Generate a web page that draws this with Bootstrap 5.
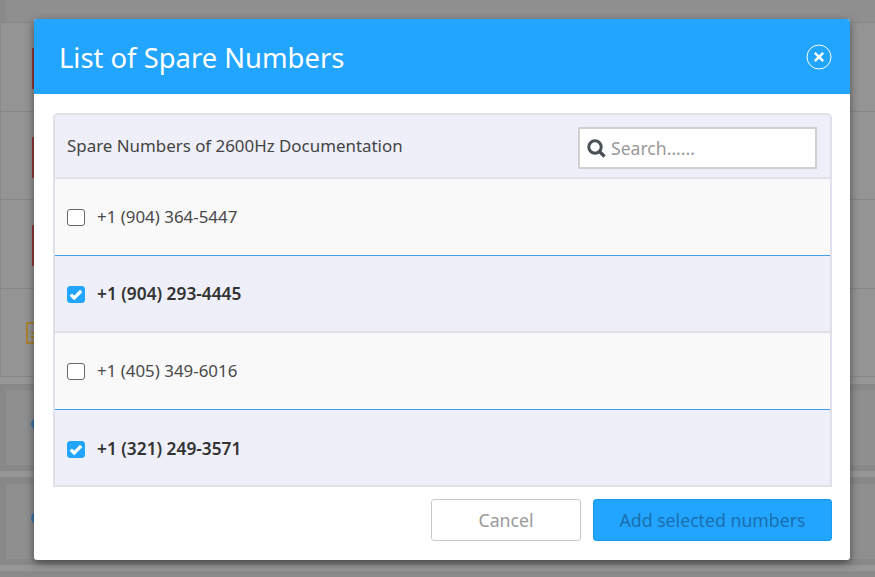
<!DOCTYPE html>
<html lang="en">
<head>
<meta charset="utf-8">
<title>List of Spare Numbers</title>
<link href="https://cdn.jsdelivr.net/npm/bootstrap@5.3.0/dist/css/bootstrap.min.css" rel="stylesheet">
<style>
html,body{height:577px;overflow:hidden}
body{background:#8a8a8a;font-family:"Noto Sans","Liberation Sans",sans-serif;color:#444}
.page-top{height:22px;background:#8f8f8f;border-left:6px solid #8a8a8a}
.bg-row{height:88.5px;background:#949494;border-top:1px solid #868686;border-left:1px solid #8a8a8a;position:relative}
.bg-mark{position:absolute;left:31px;top:25px;width:3px;height:41px;background:#983c38}
.bg-note{position:absolute;left:25px;top:33px;width:16px;height:22px;border:2px solid #a9812f}
.bg-note::after{content:"";position:absolute;left:3px;top:8px;width:6px;height:9px;background:repeating-linear-gradient(#a9812f 0 2px,transparent 2px 4px)}
.bg-gap{height:8px;background:#969696;border-top:1px solid #868686}
.bg-card{height:87px;background:#888;padding:6px 0 6px 6px}
.bg-card+.bg-foot+.bg-card{height:88px;padding-top:7px}
.bg-card>div{height:100%;background:#8f8f8f;position:relative}
.bg-dot{position:absolute;left:25px;top:28px;width:12px;height:12px;border-radius:50%;background:#3f76ad}
.bg-foot{height:6px;background:#969696}
.sheet{position:absolute;left:34px;top:19px;width:816px;height:541px;margin:0;border:0;border-radius:3px;background:#fff;box-shadow:0 3px 9px rgba(0,0,0,.5);overflow:hidden}
.sheet .modal-header{height:75px;background:#22a5ff;color:#fff;padding:0 18px 0 25px;border:0;border-radius:0;flex:none}
.sheet .modal-title{font-size:27.4px;font-weight:400;line-height:1.2;padding-top:3px}
.close-x{background:none;border:0;padding:0;width:26px;height:26px;display:block}
.sheet .modal-body{padding:19px 18px 12px 19px;flex:none}
.spare-panel{height:374px;border:2px solid #e0e0ea;border-top-left-radius:5px;border-top-right-radius:5px;background:#eeeff8;overflow:hidden}
.spare-head{height:64px;border-bottom:2px solid #e0e0ea;padding:0 13px 0 12px;font-size:16.9px}
.search-box{width:239px;height:42px;margin-top:4px!important;background:#fff;border:2px solid #d0d0d0;padding:0 8px 0 7px;gap:5px}
.search-box input{border:0;outline:0;padding:0;flex:1;min-width:0;font-size:17.6px;color:#444;background:transparent}
.search-box input::placeholder{color:#999;opacity:1}
.spare-list .list-group-item{height:77px;padding:0 0 0 12px;background:#f9f9f9;border:0;border-bottom:1px solid #3f9ee6;border-radius:0;font-size:16.9px;color:#4a4a4a;gap:12px}
.spare-list .list-group-item:nth-child(2),.spare-list .list-group-item:nth-child(4){background:#eeeff8;color:#333;font-weight:600;font-size:17.3px;padding-top:1px}
.spare-list .list-group-item:nth-child(2){border-bottom:2px solid #e0e0ea}
.spare-list .list-group-item:nth-child(4){border:0}
.spare-list .form-check-input{width:18px;height:17px;margin:1px 0 0;border:1px solid #666;border-radius:3px;flex:none}
.spare-list .form-check-input:checked{background-color:#22a5ff;border-color:#22a5ff;background-size:100% 100%;background-image:url("data:image/svg+xml,%3csvg xmlns='http://www.w3.org/2000/svg' viewBox='0 0 16 15'%3e%3cpath fill='none' stroke='%23fff' stroke-width='3.2' d='M2.8 7.6l3.4 3.4 7-7'/%3e%3c/svg%3e")}
.sheet .modal-footer{padding:0 18px 0 0;border:0;gap:12px;justify-content:flex-end;flex-wrap:nowrap}
.sheet .modal-footer>.btn{margin:0;height:42px;border-radius:3px;font-size:17.7px;padding:0}
.btn-cancel{width:150px;background:#fff;border:1px solid #c8c8c8;color:#999}
.btn-add{width:239px;background:#22a5ff;border:1px solid #1a9aee;color:#1b6fae}
</style>
</head>
<body>
<div class="page-top"></div>
<div class="bg-row"><span class="bg-mark"></span></div>
<div class="bg-row"><span class="bg-mark"></span></div>
<div class="bg-row"><span class="bg-mark"></span></div>
<div class="bg-row"><span class="bg-note"></span></div>
<div class="bg-gap"></div>
<div class="bg-card"><div><span class="bg-dot"></span></div></div>
<div class="bg-foot"></div>
<div class="bg-card"><div><span class="bg-dot"></span></div></div>
<div class="bg-foot"></div>

<div class="modal-content sheet">
  <div class="modal-header d-flex align-items-center justify-content-between">
    <h5 class="modal-title">List of Spare Numbers</h5>
    <button class="close-x" type="button" aria-label="Close">
      <svg width="26" height="26" viewBox="0 0 26 26" fill="none" stroke="#fff"><circle cx="13" cy="13" r="12" stroke-width="1"/><path d="M8.8 8.8l8.4 8.4M17.2 8.8l-8.4 8.4" stroke-width="2.4"/></svg>
    </button>
  </div>
  <div class="modal-body">
    <div class="spare-panel">
      <div class="spare-head d-flex align-items-center justify-content-between">
        <span>Spare Numbers of 2600Hz Documentation</span>
        <label class="search-box d-flex align-items-center m-0">
          <svg width="19" height="19" viewBox="0 0 19 19" fill="none" stroke="#4a5058" class="flex-shrink-0"><circle cx="8" cy="8" r="6.2" stroke-width="3"/><path d="M12.5 12.5l5 5" stroke-width="3.4"/></svg>
          <input type="text" placeholder="Search......">
        </label>
      </div>
      <div class="list-group spare-list">
        <label class="list-group-item d-flex align-items-center"><input class="form-check-input" type="checkbox"><span>+1 (904) 364-5447</span></label>
        <label class="list-group-item d-flex align-items-center"><input class="form-check-input" type="checkbox" checked><span>+1 (904) 293-4445</span></label>
        <label class="list-group-item d-flex align-items-center"><input class="form-check-input" type="checkbox"><span>+1 (405) 349-6016</span></label>
        <label class="list-group-item d-flex align-items-center"><input class="form-check-input" type="checkbox" checked><span>+1 (321) 249-3571</span></label>
      </div>
    </div>
  </div>
  <div class="modal-footer">
    <button type="button" class="btn btn-cancel">Cancel</button>
    <button type="button" class="btn btn-add">Add selected numbers</button>
  </div>
</div>
<script src="https://cdn.jsdelivr.net/npm/bootstrap@5.3.0/dist/js/bootstrap.bundle.min.js"></script>
</body>
</html>
